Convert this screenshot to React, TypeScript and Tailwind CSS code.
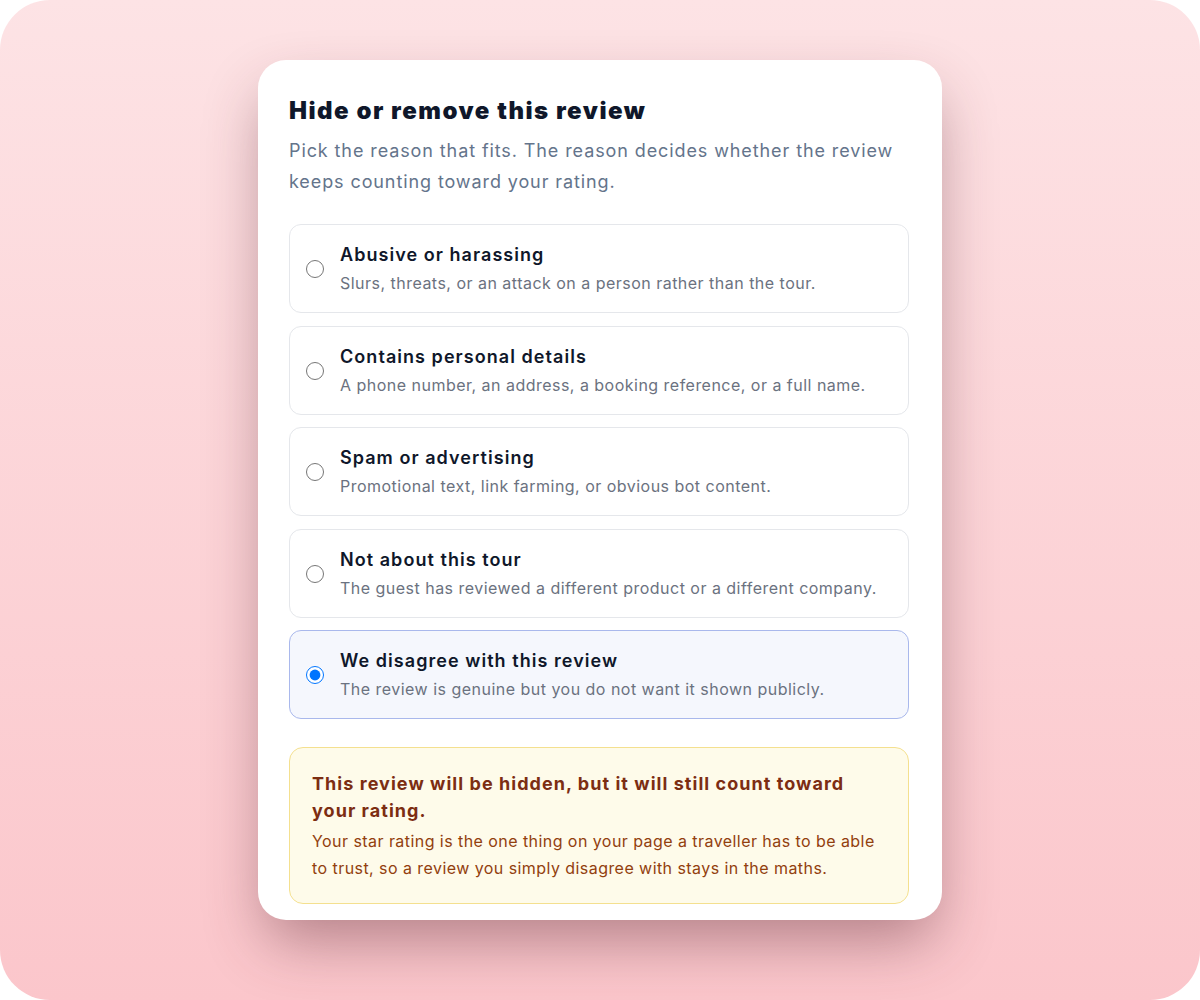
import React from "react";

const options = [
  { title: "Abusive or harassing", desc: "Slurs, threats, or an attack on a person rather than the tour." },
  { title: "Contains personal details", desc: "A phone number, an address, a booking reference, or a full name." },
  { title: "Spam or advertising", desc: "Promotional text, link farming, or obvious bot content." },
  { title: "Not about this tour", desc: "The guest has reviewed a different product or a different company." },
  { title: "We disagree with this review", desc: "The review is genuine but you do not want it shown publicly." },
];

export default function App() {
  const [sel, setSel] = React.useState(4);
  return (
    <div className="w-[1200px] h-[1000px] bg-white">
      <div
        className="w-[1200px] h-[1000px] rounded-[50px] bg-gradient-to-b from-[#fde3e5] to-[#fbc6cb] flex justify-center pt-[60px]"
        style={{ fontFamily: "Inter, 'Noto Sans', sans-serif" }}
      >
        <div className="w-[684px] h-[860px] overflow-hidden bg-white rounded-[28px] shadow-[0_28px_60px_-8px_rgba(90,40,50,0.45)] pl-[31px] pr-[33px] pt-[35px]">
          <h1 className="text-[24px] leading-[32px] font-black text-[#0f172a] tracking-[1.5px]">
            Hide or remove this review
          </h1>
          <p className="mt-[8px] text-[18px] leading-[31px] text-[#64748b] tracking-[0.9px]">
            Pick the reason that fits. The reason decides whether the review keeps counting toward your rating.
          </p>
          <div className="mt-[27px] flex flex-col gap-[12.5px]">
            {options.map((o, i) => {
              const active = sel === i;
              return (
                <label
                  key={o.title}
                  className={
                    "flex items-center gap-[16px] rounded-[12px] border pl-[16px] pr-[16px] pt-[18px] pb-[17px] cursor-pointer " +
                    (active ? "border-[#a9b8ec] bg-[#f5f7fd]" : "border-[#e5e7eb] bg-white")
                  }
                >
                  <input
                    type="radio"
                    name="reason"
                    checked={active}
                    onChange={() => setSel(i)}
                    className="w-[18px] h-[18px] m-0 shrink-0"
                  />
                  <div className="flex flex-col">
                    <span className="text-[18px] leading-[24px] font-semibold text-[#0f172a] tracking-[1.05px]">{o.title}</span>
                    <span className="mt-[4px] text-[16px] leading-[24px] text-[#6b7280] tracking-[0.48px]">{o.desc}</span>
                  </div>
                </label>
              );
            })}
          </div>
          <div className="mt-[28px] rounded-[14px] border border-[#f4e08f] bg-[#fefbea] px-[22px] pt-[22px] pb-[21px]">
            <div className="text-[18px] leading-[27px] font-bold text-[#7c2d12] tracking-[1.05px]">
              This review will be hidden, but it will still count toward your rating.
            </div>
            <div className="mt-[4px] text-[16px] leading-[27px] text-[#92400e] tracking-[0.44px]">
              Your star rating is the one thing on your page a traveller has to be able to trust, so a review you simply disagree with stays in the maths.
            </div>
          </div>
        </div>
      </div>
    </div>
  );
}
